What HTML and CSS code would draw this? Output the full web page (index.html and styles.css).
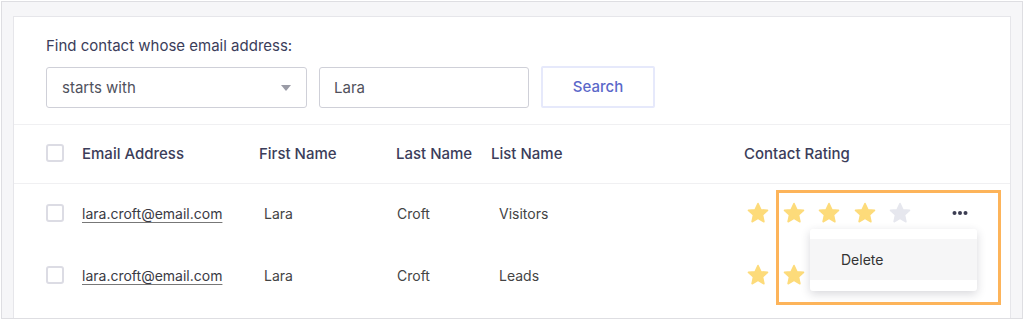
FILE: index.html
```html
<!DOCTYPE html>
<html lang="en">
<head>
    <meta charset="UTF-8">
    <meta name="viewport" content="width=device-width, initial-scale=1.0">
    <title>Contacts</title>
    <link rel="stylesheet" href="styles.css">
</head>
<body>
    <div class="frame">
        <div class="card">
            <form class="finder">
                <label class="finder-label" for="query">Find contact whose email address:</label>
                <div class="finder-controls">
                    <div class="select">
                        <span>starts with</span>
                        <span class="caret"></span>
                    </div>
                    <input class="text-input" type="text" id="query" value="Lara">
                    <button type="button" class="search-btn">Search</button>
                </div>
            </form>

            <div class="table">
                <div class="row head">
                    <span class="check"></span>
                    <span>Email Address</span>
                    <span>First Name</span>
                    <span>Last Name</span>
                    <span>List Name</span>
                    <span>Contact Rating</span>
                </div>
                <div class="row">
                    <span class="check"></span>
                    <a href="#" class="email">lara.croft@email.com</a>
                    <span class="first">Lara</span>
                    <span class="last">Croft</span>
                    <span class="list">Visitors</span>
                    <span class="rating" data-value="4"></span>
                </div>
                <div class="row">
                    <span class="check"></span>
                    <a href="#" class="email">lara.croft@email.com</a>
                    <span class="first">Lara</span>
                    <span class="last">Croft</span>
                    <span class="list">Leads</span>
                    <span class="rating" data-value="4"></span>
                </div>
            </div>

            <div class="highlight"></div>
            <div class="menu">
                <div class="menu-item">Delete</div>
            </div>
        </div>
    </div>
    <script>
        const star = fill => `<svg class="star" width="24" height="24" viewBox="0 0 24 24"><path d="M12 2.5l2.8 6.2 6.7.7-5 4.6 1.4 6.7L12 17.3l-5.9 3.4 1.4-6.7-5-4.6 6.7-.7z" fill="${fill}" stroke="${fill}" stroke-width="1.6" stroke-linejoin="round"/></svg>`;
        const dots = '<svg class="dots" width="16" height="6" viewBox="0 0 16 6"><circle cx="2.5" cy="3" r="2" fill="#3b3d52"/><circle cx="8" cy="3" r="2" fill="#3b3d52"/><circle cx="13.5" cy="3" r="2" fill="#3b3d52"/></svg>';

        document.querySelectorAll('.rating').forEach(function(cell) {
            const value = Number(cell.dataset.value);
            let html = '';
            for (let i = 0; i < 5; i++) {
                html += star(i < value ? '#fddb7a' : '#e6e7ee');
            }
            cell.innerHTML = html + dots;
        });
    </script>
</body>
</html>
```

FILE: styles.css
```css
* { box-sizing: border-box; }
body { margin: 0; font-family: Inter, "Liberation Sans", sans-serif; font-size: 14px; color: #444; }

.frame { margin: 1px; height: 318px; border: 1px solid #dedee2; background: #f6f6f8; padding: 14px 11px 0 11px; overflow: hidden; }
.card { position: relative; height: 320px; background: #fff; border: 1px solid #e6e6ea; }

.finder { padding: 19px 32px 16px; border-bottom: 1px solid #f0f0f2; }
.finder-label { display: block; margin-bottom: 11px; line-height: 20px; font-size: 15px; color: #3b3d5a; }
.finder-controls { display: flex; align-items: center; gap: 12px; }
.select { width: 261px; height: 41px; border: 1px solid #cfd0d8; border-radius: 3px; display: flex; align-items: center; justify-content: space-between; padding: 0 15px 0 15px; font-size: 15px; color: #50515c; }
.caret { width: 0; height: 0; border-left: 5px solid transparent; border-right: 5px solid transparent; border-top: 6px solid #9a9ba6; }
.text-input { width: 210px; height: 41px; border: 1px solid #cfd0d8; border-radius: 3px; padding: 0 14px; font: inherit; font-size: 15px; color: #50515c; }
.search-btn { width: 114px; height: 42px; margin-top: -2px; border: 2px solid #e6e9fb; border-radius: 2px; background: #fff; color: #5b68c9; font: inherit; font-size: 15px; font-weight: 500; cursor: pointer; }

.row { display: grid; grid-template-columns: 36px 177px 137px 95px 253px 1fr; align-items: center; height: 62px; padding: 0 0 4px 32px; }
.row.head { height: 59px; padding-bottom: 2px; border-bottom: 1px solid #f0f0f2; font-size: 15px; font-weight: 500; color: #3b3d5a; }
.check { width: 18px; height: 18px; border: 2px solid #dcdce4; border-radius: 3px; }
.email { color: #3a3a44; text-decoration: underline; text-decoration-color: #777; text-underline-offset: 3px; }
.first { padding-left: 5px; }
.last { padding-left: 1px; }
.list { padding-left: 8px; }
.rating { display: flex; align-items: center; gap: 11.5px; padding-left: 2px; }
.dots { margin-left: 28px; }

.highlight { position: absolute; left: 762px; top: 173px; width: 225px; height: 115px; border: 3px solid #fdb45a; }
.menu { position: absolute; left: 796px; top: 212px; width: 167px; height: 62px; padding: 10px 0 11px; background: #fff; border-radius: 3px; box-shadow: 0 3px 10px rgba(40, 40, 60, 0.18); }
.menu-item { height: 41px; line-height: 41px; padding-left: 31px; background: #f6f6f7; color: #333; }
```
